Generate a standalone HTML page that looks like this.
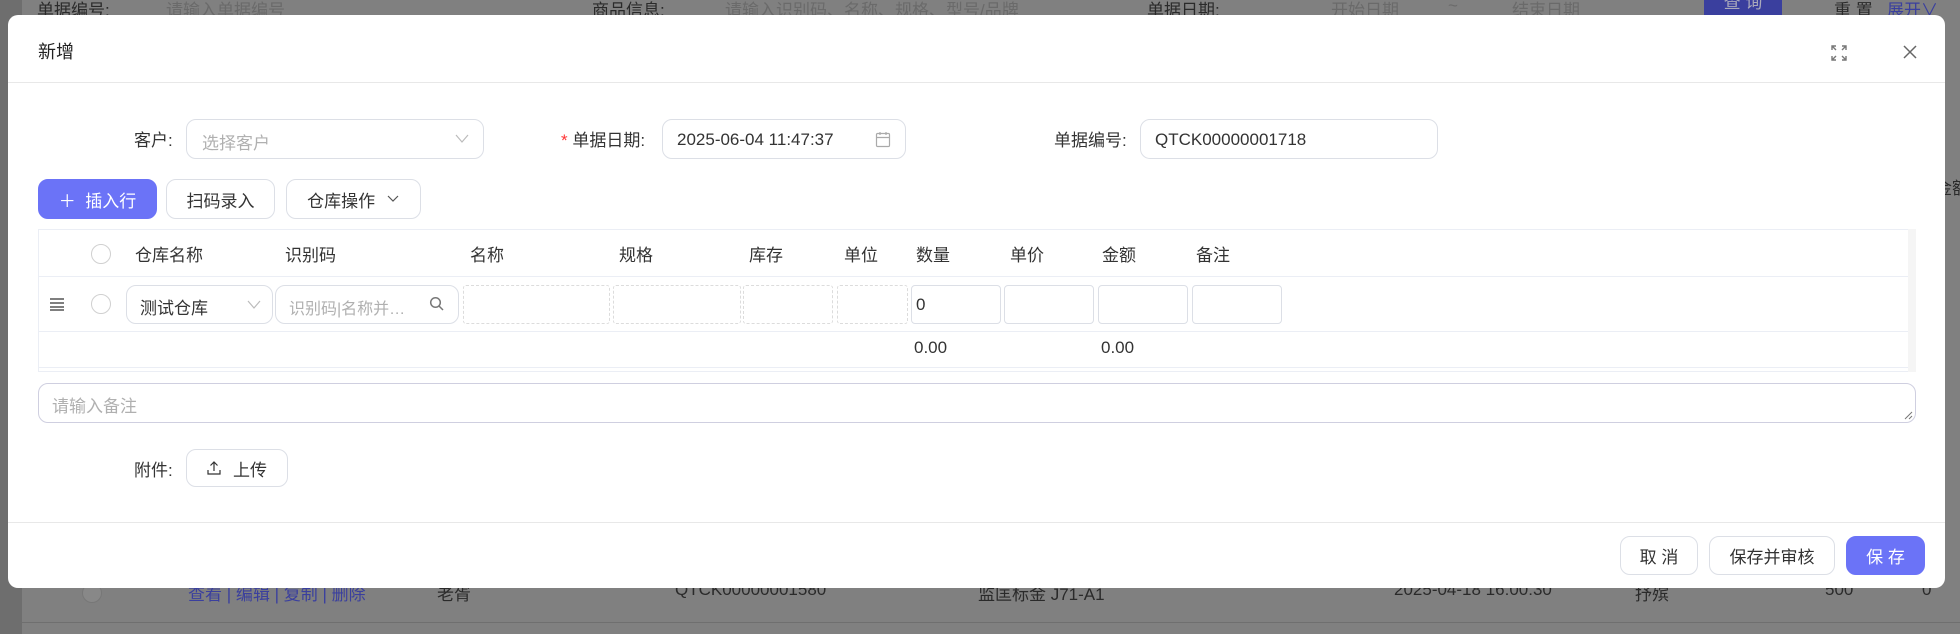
<!DOCTYPE html>
<html><head><meta charset="utf-8">
<style>
*{box-sizing:border-box;margin:0;padding:0}
body{width:1960px;height:634px;overflow:hidden;background:#808080;font-family:"Liberation Sans","Noto Sans CJK SC",sans-serif;font-size:17px;color:#333;position:relative}
.a{position:absolute;white-space:nowrap}
.bgt{color:#2a2a2a;font-size:17px}
.bgp{color:#6a6a6a}
.modal{position:absolute;left:8px;top:15px;width:1937px;height:573px;background:#fff;border-radius:10px;overflow:hidden}
.box{position:absolute;border:1px solid #dcdfe6;border-radius:10px;background:#fff}
.dash{position:absolute;border:1px dashed #dcdcdc;border-radius:3px}
.btn{position:absolute;border:1px solid #dcdfe6;border-radius:10px;background:#fff;display:flex;align-items:center;justify-content:center;color:#333;font-size:17px}
.ph{color:#b0b0b0}
.circ{position:absolute;width:20px;height:20px;border:1px solid #d0d0d0;border-radius:50%;background:#fff}
</style></head><body>
<div class="a" style="left:0;top:0;width:22px;height:634px;background:#6e6e6e"></div>
<div class="a bgt" style="left:37px;top:-4px">单据编号:</div>
<div class="a bgp" style="left:166px;top:-4px">请输入单据编号</div>
<div class="a bgt" style="left:592px;top:-4px">商品信息:</div>
<div class="a bgp" style="left:725px;top:-4px">请输入识别码、名称、规格、型号/品牌</div>
<div class="a bgt" style="left:1147px;top:-4px">单据日期:</div>
<div class="a bgp" style="left:1331px;top:-4px">开始日期</div>
<div class="a bgp" style="left:1448px;top:-4px">~</div>
<div class="a bgp" style="left:1512px;top:-4px">结束日期</div>
<div class="a" style="left:1704px;top:0;width:78px;height:15px;background:#3a3f9e;color:#aab;text-align:center;font-size:17px;line-height:6px">查 询</div>
<div class="a bgt" style="left:1834px;top:-4px">重 置</div>
<div class="a" style="left:1887px;top:-4px;color:#3a3f9e">展开∨</div>
<div class="a bgt" style="left:1935px;top:174px">金额</div>
<div class="circ" style="left:82px;top:583px;border-color:#777;background:#888"></div>
<div class="a" style="left:188px;top:580px;color:#3a3f9e">查看 | 编辑 | 复制 | 删除</div>
<div class="a bgt" style="left:437px;top:580px">老胥</div>
<div class="a bgt" style="left:675px;top:580px">QTCK00000001580</div>
<div class="a bgt" style="left:978px;top:580px">监匡标金 J71-A1</div>
<div class="a bgt" style="left:1394px;top:580px">2025-04-18 16:00:30</div>
<div class="a bgt" style="left:1635px;top:580px">抒殡</div>
<div class="a bgt" style="left:1825px;top:580px">500</div>
<div class="a bgt" style="left:1922px;top:580px">0</div>
<div class="a" style="left:22px;top:622px;width:1938px;height:1px;background:#6f6f6f"></div>

<div class="modal">
  <div class="a" style="left:30px;top:23px;font-size:18px;color:#222">新增</div>
  <svg class="a" style="left:1822px;top:29px" width="18" height="18" viewBox="0 0 18 18" fill="none" stroke="#777" stroke-width="1.4"><path d="M2 6V2h4M2 2l4 4M16 6V2h-4M16 2l-4 4M2 12v4h4M2 16l4-4M16 12v4h-4M16 16l-4-4"/></svg>
  <svg class="a" style="left:1893px;top:28px" width="18" height="18" viewBox="0 0 18 18" stroke="#666" stroke-width="1.5"><path d="M3 3l12 12M15 3L3 15"/></svg>
  <div class="a" style="left:0;top:67px;width:1937px;height:1px;background:#e8e8e8"></div>

  <div class="a" style="left:126px;top:111px">客户:</div>
  <div class="box" style="left:178px;top:104px;width:298px;height:40px"><span class="a ph" style="left:15px;top:9px">选择客户</span><svg class="a" style="left:268px;top:14px" width="14" height="10"><path d="M1 1l6 7 6-7" stroke="#bbb" fill="none" stroke-width="1.2"/></svg></div>
  <div class="a" style="left:553px;top:111px"><span style="color:#f33">*</span> 单据日期:</div>
  <div class="box" style="left:654px;top:104px;width:244px;height:40px"><span class="a" style="left:14px;top:10px">2025-06-04 11:47:37</span><svg class="a" style="left:212px;top:11px" width="16" height="17" fill="none" stroke="#aaa" stroke-width="1.2"><rect x="1.5" y="2.5" width="13" height="13" rx="1"/><path d="M1.5 6.5h13M5 1v3M11 1v3"/></svg></div>
  <div class="a" style="left:1046px;top:111px">单据编号:</div>
  <div class="box" style="left:1132px;top:104px;width:298px;height:40px"><span class="a" style="left:14px;top:10px">QTCK00000001718</span></div>

  <div class="btn" style="left:30px;top:164px;width:119px;height:40px;background:#6b73f7;border-color:#6b73f7;color:#fff">＋&nbsp; 插入行</div>
  <div class="btn" style="left:158px;top:164px;width:109px;height:40px">扫码录入</div>
  <div class="btn" style="left:278px;top:164px;width:135px;height:40px">仓库操作&nbsp;<svg width="14" height="10" style="margin-left:6px"><path d="M2 2l5 5 5-5" stroke="#555" fill="none" stroke-width="1.2"/></svg></div>

  <div class="a" style="left:30px;top:214px;width:1878px;height:143px;border:1px solid #ebeef5"></div>
  <div class="a" style="left:1900px;top:214px;width:8px;height:143px;background:#f5f5f5"></div>
  <div class="a" style="left:30px;top:261px;width:1870px;height:1px;background:#ebeef5"></div>
  <div class="a" style="left:30px;top:316px;width:1870px;height:1px;background:#ebeef5"></div>
  <div class="a" style="left:30px;top:352px;width:1870px;height:1px;background:#ebeef5"></div>
  <div class="circ" style="left:83px;top:229px"></div>
  <div class="a" style="left:127px;top:226px">仓库名称</div>
  <div class="a" style="left:277px;top:226px">识别码</div>
  <div class="a" style="left:462px;top:226px">名称</div>
  <div class="a" style="left:611px;top:226px">规格</div>
  <div class="a" style="left:741px;top:226px">库存</div>
  <div class="a" style="left:836px;top:226px">单位</div>
  <div class="a" style="left:908px;top:226px">数量</div>
  <div class="a" style="left:1002px;top:226px">单价</div>
  <div class="a" style="left:1094px;top:226px">金额</div>
  <div class="a" style="left:1188px;top:226px">备注</div>

  <svg class="a" style="left:41px;top:282px" width="16" height="14" stroke="#333"><path d="M1 2h14M1 6h14M1 10h14M1 13h14" stroke-width="1.3"/></svg>
  <div class="circ" style="left:83px;top:279px"></div>
  <div class="box" style="left:118px;top:270px;width:147px;height:39px"><span class="a" style="left:13px;top:8px">测试仓库</span><svg class="a" style="left:120px;top:14px" width="14" height="10"><path d="M1 1l6 7 6-7" stroke="#bbb" fill="none" stroke-width="1.2"/></svg></div>
  <div class="box" style="left:267px;top:270px;width:184px;height:39px"><span class="a ph" style="left:13px;top:9px;font-size:16px">识别码|名称并…</span><svg class="a" style="left:153px;top:10px" width="16" height="16" fill="none" stroke="#777" stroke-width="1.5"><circle cx="6.5" cy="6.5" r="4.8"/><path d="M10 10l4 4"/></svg></div>
  <div class="dash" style="left:455px;top:270px;width:147px;height:39px"></div>
  <div class="dash" style="left:605px;top:270px;width:128px;height:39px"></div>
  <div class="dash" style="left:735px;top:270px;width:90px;height:39px"></div>
  <div class="dash" style="left:829px;top:270px;width:71px;height:39px"></div>
  <div class="box" style="left:903px;top:270px;width:90px;height:39px;border-radius:4px"><span class="a" style="left:4px;top:9px">0</span></div>
  <div class="box" style="left:996px;top:270px;width:90px;height:39px;border-radius:4px"></div>
  <div class="box" style="left:1090px;top:270px;width:90px;height:39px;border-radius:4px"></div>
  <div class="box" style="left:1184px;top:270px;width:90px;height:39px;border-radius:4px"></div>
  <div class="a" style="left:906px;top:323px">0.00</div>
  <div class="a" style="left:1093px;top:323px">0.00</div>

  <div class="box" style="left:30px;top:368px;width:1878px;height:40px;border-color:#cfcfe0"><span class="a ph" style="left:13px;top:8px">请输入备注</span><svg class="a" style="right:2px;bottom:2px" width="9" height="9" stroke="#777"><path d="M1 8l7-7M5 8l3-3"/></svg></div>

  <div class="a" style="left:126px;top:441px">附件:</div>
  <div class="btn" style="left:178px;top:434px;width:102px;height:38px"><svg width="14" height="14" style="margin-right:12px" fill="none" stroke="#333" stroke-width="1.2"><path d="M7 10V1M3.5 4.5L7 1l3.5 3.5M1 9v4h12V9"/></svg>上传</div>

  <div class="a" style="left:0;top:507px;width:1937px;height:1px;background:#e8e8e8"></div>
  <div class="btn" style="left:1612px;top:521px;width:78px;height:39px">取 消</div>
  <div class="btn" style="left:1701px;top:521px;width:126px;height:39px">保存并审核</div>
  <div class="btn" style="left:1838px;top:521px;width:79px;height:39px;background:#6b73f7;border-color:#6b73f7;color:#fff">保 存</div>
</div>
</body></html>
